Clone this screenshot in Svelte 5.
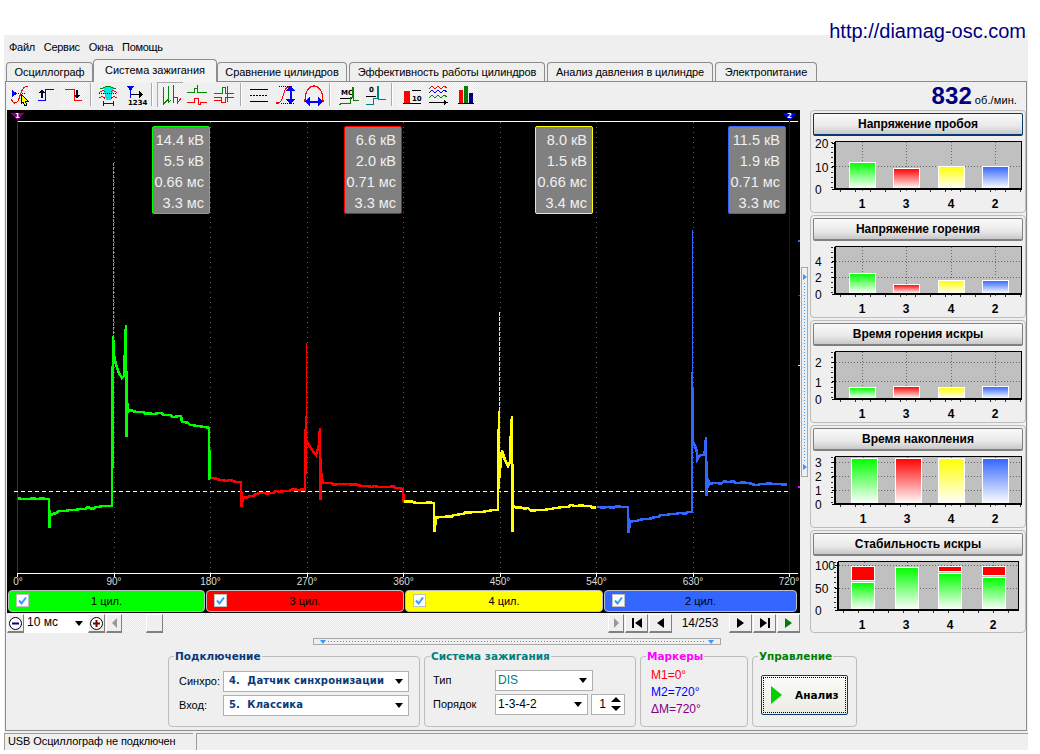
<script>
  const tabs = ['Осциллограф', 'Система зажигания', 'Сравнение цилиндров', 'Эффективность работы цилиндров', 'Анализ давления в цилиндре', 'Электропитание'];
  const menu = ['Файл', 'Сервис', 'Окна', 'Помощь'];

  const degrees = [0, 90, 180, 270, 360, 450, 540, 630, 720];
  const tickX = (i) => 17.5 + i * 96.5;

  const colors = { green: '#00ff00', red: '#ff0000', yellow: '#ffff00', blue: '#3366ff' };

  // the sampled signal is never quite flat, so long runs get small steps
  function roughen(points) {
    const pts = points.split(' ').map((p) => p.split(',').map(Number));
    const out = [];
    pts.forEach(([x, y], i) => {
      out.push(`${x},${y}`);
      const next = pts[i + 1];
      if (!next || next[0] - x < 5) return;
      for (let sx = x + 3; sx < next[0] - 1; sx += 3) {
        const sy = y + ((next[1] - y) * (sx - x)) / (next[0] - x);
        const noise = Math.round(Math.sin(sx * 0.7) * 0.6 + Math.sin(sx * 1.9) * 0.4);
        out.push(`${sx},${Math.round(sy + noise)}`);
      }
    });
    return out.join(' ');
  }

  // page coordinates, viewBox of the scope starts at 7,110
  const traces = [
    {
      color: colors.green,
      spike: 'M113.5 163V337',
      dash: '3 1',
      thick: 'M113 336V430M125.5 352V372M49.5 510V522M127 405V420',
      points: '18,498 30,499 49,499 49.5,528 50,515 56,513 66,511 76,510 90,508 105,506 112,506 113,336 114,355 116,365 119,373 122,378 124,376 125,350 126,325 126.5,437 127,400 128,412 130,410 140,412 155,414 170,415 175,417 181,416 182,422 190,425 200,426 209,428 209.5,479 210,479'
    },
    {
      color: colors.red,
      spike: 'M306.5 343V418',
      thick: 'M306 416V465M319.5 428V445M241.500 495V505M321 475V490',
      points: '211,478 220,480 230,480 241,482 241.5,507 243,497 250,496 260,493 267,493.5 280,492 291,490 305,490 306,416 306,440 309,445 312,450 316,455 319,445 320,428 320.5,500 321,472 323,483 328,483 340,484 355,484 365,486 375,486 390,487 403,489 403.5,502'
    },
    {
      color: colors.yellow,
      spike: 'M499.5 312V412',
      dash: '4 1',
      thick: 'M498.5 411V480M511.5 416V470M434.500 517V532M513 505V520',
      points: '404,501 420,503 434,503 434.5,532 436,518 445,517 460,514 480,512 498,510 499,411 499,480 502,450 505,460 508,466 510,462 511,430 512,416 512.5,532 513,505 516,508 525,508.5 530,510 545,510 555,508 565,507 575,506 590,506 596,507'
    },
    {
      color: colors.blue,
      spike: 'M692.5 230V373',
      thick: 'M692 372V475M628.500 518V530M707 478V490',
      points: '597,507 628,507 628.5,533 630,522 640,520 655,517 670,514 690,512 692,512 692,372 693,442 695,446 697,452 697,460 700,455 704,455 705,450 706,437 706.5,496 708,480 710,484 715,483 730,482 740,483 760,484 775,484 787,484'
    }
  ].map((t) => ({ ...t, points: roughen(t.points) }));

  const infoBoxes = [
    { left: 145, color: colors.green, lines: ['14.4 кВ', '5.5 кВ', '0.66 мс', '3.3 мс'] },
    { left: 337, color: colors.red, lines: ['6.6 кВ', '2.0 кВ', '0.71 мс', '3.3 мс'] },
    { left: 528, color: colors.yellow, lines: ['8.0 кВ', '1.5 кВ', '0.66 мс', '3.4 мс'] },
    { left: 721, color: colors.blue, lines: ['11.5 кВ', '1.9 кВ', '0.71 мс', '3.3 мс'] }
  ];

  const channels = [
    { name: '1 цил.', color: colors.green },
    { name: '3 цил.', color: colors.red },
    { name: '4 цил.', color: colors.yellow },
    { name: '2 цил.', color: colors.blue }
  ];

  const columns = ['green', 'red', 'yellow', 'blue'];
  const names = ['1', '3', '4', '2'];

  // all chart geometry in page coordinates
  const charts = [
    {
      title: 'Напряжение пробоя', focus: true, top: 136, plot: [836, 142, 1021, 189], labelY: 203, labelStart: 815,
      yTicks: [['20', 143], ['10', 166.5], ['0', 189]], grid: [166.5], vGrid: [862, 906, 951, 995], labelX: [862, 906, 951, 995],
      bars: [[849, 27, 162], [893, 27, 168], [938, 27, 166], [982, 27, 166]]
    },
    {
      title: 'Напряжение горения', top: 241, plot: [836, 247, 1021, 294], labelY: 308, labelStart: 815,
      yTicks: [['4', 261], ['2', 277], ['0', 294]], grid: [261, 277], vGrid: [862, 906, 951, 995], labelX: [862, 906, 951, 995],
      bars: [[849, 27, 273], [893, 27, 284], [938, 27, 280], [982, 27, 280]]
    },
    {
      title: 'Время горения искры', top: 346, plot: [836, 352, 1021, 399], labelY: 413, labelStart: 815,
      yTicks: [['2', 362], ['1', 381.5], ['0', 399]], grid: [362, 381.5], vGrid: [862, 906, 951, 995], labelX: [862, 906, 951, 995],
      bars: [[849, 27, 387], [893, 27, 386], [938, 27, 387], [982, 27, 386]]
    },
    {
      title: 'Время накопления', top: 451, plot: [836, 457, 1021, 504], labelY: 518, labelStart: 815,
      yTicks: [['3', 462], ['2', 476], ['1', 490], ['0', 504]], grid: [462, 476, 490], vGrid: [863, 907, 951, 995], labelX: [863, 907, 951, 995],
      bars: [[851, 27, 458], [895, 27, 458], [938, 27, 458], [982, 27, 458]]
    },
    {
      title: 'Стабильность искры', top: 556, plot: [839, 562, 1018, 610], labelY: 624, labelStart: 815,
      yTicks: [['100', 565], ['50', 588], ['0', 610]], grid: [565, 588], vGrid: [864, 907, 951, 993], labelX: [862, 906, 950, 993],
      bars: [[851, 24, 582], [895, 24, 567], [938, 24, 573], [982, 24, 577]],
      allGreen: true,
      fails: [[851, 24, 566, 580], [938, 24, 566, 571], [982, 24, 566, 575]]
    }
  ];
</script>

<div class="page">
  <div class="url">http://diamag-osc.com</div>

  <div class="app">
    <div class="menu">
      {#each menu as item}<span>{item}</span>{/each}
    </div>

    <div class="tabs">
      {#each tabs as tab, i}
        <div class="tab" class:active={i === 1}>{tab}</div>
      {/each}
    </div>

    <div class="panel">
      <div class="toolbar">
        <button class="tool on"><svg viewBox="6 82 26 25"><path d="M13 93.5H24" stroke="#00f" stroke-dasharray="1 1" /><path d="M11 90l5 3.5-5 3.5z" fill="#00f" /><path d="M10 99q3 7 7 2l3-8q3-8 7-6" stroke="#f00" fill="none" stroke-width="1.2" /><path d="M20 94v10l2-2 2 4 2-1-2-4h3z" fill="#ff0" stroke="#000" /></svg></button>
        <button class="tool"><svg viewBox="33 82 26 25"><path d="M37 100.5H44.5V89.5H53" stroke="#00f" fill="none" /><path d="M41 98V92" stroke="#003" stroke-width="2" /><path d="M38 93l3-4 3 4z" fill="#003" /></svg></button>
        <button class="tool on"><svg viewBox="60 82 26 25"><path d="M64 89.500H73.500V100.500H81" stroke="#f00" fill="none" /><path d="M76 90V96" stroke="#003" stroke-width="2" /><path d="M73 95l3 4 3-4z" fill="#003" /></svg></button>
        <span class="sep"></span>
        <button class="tool"><svg viewBox="94 82 26 25"><path d="M102 87h11l-3 13h-5z" fill="#00e8e8" /><path d="M99 89l8-3 8 3" stroke="#080" fill="none" /><path d="M98 93q4-4 6-1M116 93q-4-4-6-1M98 98q4-3 6 1M116 98q-4-3-6 1" stroke="#f00" fill="none" /><path d="M98 93.500H116" stroke="#000" stroke-dasharray="1 1" /><path d="M103 103.500H112M102.500 101v5M112.500 101v5" stroke="#00f" /></svg></button>
        <button class="tool"><svg viewBox="121 82 26 25"><path d="M126 86h7l-3.500 5z" fill="#00f" /><path d="M129.500 88V98" stroke="#00f" /><path d="M130 94.500H140" stroke="#000" /><path d="M138 91l4 3.500-4 3.500z" fill="#000" /><text class="icon-text" x="127" y="105">1234</text></svg></button>
        <span class="sep wide"></span>
        <button class="tool on pressed"><svg viewBox="156 82 26 25"><path d="M162.500 87V104L167 99.500V97" stroke="#080" fill="none" /><path d="M167.500 86V102L170 100" stroke="#080" fill="none" /><path d="M172.500 85V103M172.500 97H176.500V103L180 98" stroke="#f00" fill="none" /></svg></button>
        <button class="tool"><svg viewBox="183 82 26 25"><path d="M186 92.500H193.500V88.500H196.500V85V92.500H206" stroke="#080" fill="none" /><path d="M186 102.500H193.500V98.500H197.500V104.500H199.500V102.500H206" stroke="#f00" fill="none" /></svg></button>
        <button class="tool"><svg viewBox="210 82 26 25"><path d="M213 93.500H221.500V87H224.500V93.500H233" stroke="#080" fill="none" /><path d="M226.500 86V102" stroke="#080" /><path d="M213 97.500H220.500V102H224.500V97.500H233M213 100.500H220" stroke="#f00" fill="none" /></svg></button>
        <span class="sep wide"></span>
        <button class="tool"><svg viewBox="245 82 26 25"><path d="M249 89.500H267M249 101.500H267" stroke="#000" /><path d="M249 95.500H267" stroke="#000" stroke-dasharray="2 1" /></svg></button>
        <button class="tool"><svg viewBox="272 82 26 25"><path d="M275 103q4 1 6-4l3-9q2-4 6-3" stroke="#f00" fill="none" stroke-width="1.2" /><path d="M278 86.500H292M280 103.500H294" stroke="#000" stroke-dasharray="1 1" /><path d="M289.500 90V100" stroke="#00f" stroke-width="2" /><path d="M285 91l4.500-5 4.500 5zM285 99l4.500 5 4.500-5z" fill="#00f" /></svg></button>
        <button class="tool"><svg viewBox="299 82 26 25"><path d="M304 102q0-15 9-16 9 1 9 16" stroke="#f00" fill="none" stroke-width="1.2" /><path d="M308 101.500H318" stroke="#00f" stroke-width="2" /><path d="M309 97l-5 4.500 5 4.500zM317 97l5 4.500-5 4.500z" fill="#00f" /></svg></button>
        <span class="sep wide"></span>
        <button class="tool on"><svg viewBox="334 82 26 25"><text class="icon-text" x="340" y="95">МС</text><path d="M339 98.500H351" stroke="#000" /><path d="M338 105l3-2H349.500V97H351.500V87H352.500V100.500H358" stroke="#080" fill="none" /></svg></button>
        <button class="tool"><svg viewBox="361 82 26 25"><text class="icon-text" x="368" y="92">0</text><path d="M365 96.500H375" stroke="#000" /><path d="M365 104.500H372.500V98H376.500V86H377.500V99.500H385" stroke="#008080" fill="none" /></svg></button>
        <span class="sep wide"></span>
        <button class="tool on"><svg viewBox="396 82 26 25"><rect x="403" y="91" width="6" height="12" fill="#f00" /><path d="M411 90.500H420M402 103.500H420" stroke="#000" /><text class="icon-text" x="411" y="101">10</text></svg></button>
        <button class="tool"><svg viewBox="423 82 26 25"><path d="M428 89l3-3 3 3 3-3 3 3 3-3 3 2" stroke="#f00" fill="none" /><path d="M428 93l3-3 3 3 3-3 3 3 3-3 3 2" stroke="#00f" fill="none" /><path d="M428 98l3-3 3 3 3-3 3 3 3-3 3 2" stroke="#080" fill="none" /><path d="M428 102.500H444" stroke="#000" /><path d="M443 100l4 2.500-4 2.500z" fill="#000" /></svg></button>
        <button class="tool on"><svg viewBox="450 82 26 25"><rect x="458" y="90" width="4" height="13" fill="#f00" /><rect x="463" y="86" width="4" height="17" fill="#008000" /><rect x="468" y="93" width="4" height="10" fill="#00007f" /><path d="M457 103.500H473" stroke="#000" /></svg></button>
        <div class="rpm"><b>832</b><span>об./мин.</span></div>
      </div>

      <div class="middle">
        <div class="scope-col">
          <div class="scope">
            <svg class="trace" viewBox="7 110 793 479" width="793" height="479">
              {#each degrees as deg, i}
                <path d="M{tickX(i)} 122V573" stroke="#606060" stroke-dasharray="1 4" />
                <path d="M{tickX(i)} 573V577" stroke="#fff" />
                <text class="deg" x={i === 0 ? 18 : i === 8 ? 789 : tickX(i)} y="585">{deg}°</text>
              {/each}
              <path d="M17 121.500H798" stroke="#fff" />
              <path d="M17 573.500H798" stroke="#fff" />
              <path d="M17.500 113V573" stroke="#800080" />
              <path d="M789.500 113V573" stroke="#0000e0" />
              <path d="M14 491.500H789" stroke="#fff" stroke-dasharray="4 3" />
              {#each traces as t}
                <path d={t.spike} stroke={t.color} stroke-dasharray={t.dash} />
                <path d={t.thick} stroke={t.color} stroke-width="2" />
                <polyline points={t.points} stroke={t.color} stroke-width="2.600" fill="none" />
              {/each}
              <path d="M10 113h15l-7.500 7z" fill="#800080" />
              <path d="M782 113h15l-7.500 7z" fill="#0000f0" />
              <text class="pin" x="17.500" y="118">1</text>
              <text class="pin" x="789.500" y="118">2</text>
              <rect x="798" y="240" width="2" height="2" fill="#3366ff" />
              <rect x="798" y="295" width="2" height="1" fill="#f00" />
              <rect x="798" y="365" width="2" height="1" fill="#fff" />
              <rect x="798" y="486" width="2" height="2" fill="#f0f" />
            </svg>

            {#each infoBoxes as box}
              <div class="info" style="left: {box.left}px; border-color: {box.color}">
                {#each box.lines as line}<div>{line}</div>{/each}
              </div>
            {/each}

            <div class="channels">
              {#each channels as ch}
                <div class="channel" style="background: {ch.color}">
                  <span class="check"><svg viewBox="0 0 11 11" width="11" height="11"><path d="M2 5.500l2.500 3L9 2.500" stroke="#3399ff" stroke-width="2" fill="none" /></svg></span>
                  <span class="ch-name">{ch.name}</span>
                </div>
              {/each}
            </div>
          </div>

          <div class="controls">
            <button class="ctl round"><svg viewBox="0 0 15 15" width="15" height="15"><circle cx="7.500" cy="7.500" r="6" fill="#fff" stroke="#000" /><path d="M4 7.500H11" stroke="#00007f" stroke-width="2" /></svg></button>
            <div class="range">10 мс<i class="arrow"></i></div>
            <button class="ctl round"><svg viewBox="0 0 15 15" width="15" height="15"><circle cx="7.500" cy="7.500" r="6" fill="#fff" stroke="#000" /><path d="M4 7.500H11M7.500 4V11" stroke="#7f0000" stroke-width="2" /></svg></button>
            <button class="ctl scroll-end"><i class="tri left grey"></i></button>
            <div class="track"><span class="thumb"></span></div>
            <button class="ctl scroll-end"><i class="tri right grey"></i></button>
            <button class="ctl nav"><i class="bar"></i><i class="tri left"></i></button>
            <button class="ctl nav"><i class="tri left"></i></button>
            <div class="counter">14/253</div>
            <button class="ctl nav"><i class="tri right"></i></button>
            <button class="ctl nav"><i class="tri right"></i><i class="bar"></i></button>
            <button class="ctl nav"><i class="tri right play"></i></button>
          </div>
        </div>

        <div class="vsplit">
          <i class="tri right blue"></i>
          <i class="dots"></i>
          <i class="tri right blue"></i>
        </div>

        <div class="side">
          {#each charts as c}
            <section class="chart">
              <div class="chart-title" class:focus={c.focus}>{c.title}</div>
              <svg viewBox="810 {c.top} 215 75" width="215" height="75">
                <rect x={c.plot[0]} y={c.plot[1]} width={c.plot[2] - c.plot[0]} height={c.plot[3] - c.plot[1]} fill="#c0c0c0" />
                {#each c.grid as y}
                  <path d="M{c.plot[0]} {y}H{c.plot[2]}" stroke="#666" stroke-dasharray="1 2" />
                {/each}
                {#each c.vGrid as x}
                  <path d="M{x + 0.5} {c.plot[1]}V{c.plot[3] + 3}" stroke="#666" stroke-dasharray="1 2" />
                {/each}
                {#each c.bars as b, i}
                  <rect x={b[0] + 0.5} y={b[2] + 0.5} width={b[1] - 1} height={c.plot[3] - b[2] - 1} fill="url(#fade-{c.allGreen ? 'green' : columns[i]})" stroke="#fff" />
                {/each}
                {#each c.fails || [] as f}
                  <rect x={f[0] + 0.5} y={f[2] + 0.5} width={f[1] - 1} height={f[3] - f[2]} fill="#f00" stroke="#fff" />
                {/each}
                <path d="M{c.plot[0] - 1} {c.plot[3]}V{c.plot[1] - 0.5}H{c.plot[2] + 0.5}V{c.plot[3]}" fill="none" stroke="#000" />
                <path d="M{c.plot[0] - 1} {c.plot[1]}V{c.plot[3]}" stroke="#000" stroke-width="2" />
                <path d="M{c.plot[0] - 4} {c.plot[1]}V{c.plot[3]}" stroke="#333" stroke-width="2" stroke-dasharray="1 4" />
                <path d="M{c.plot[0] - 1} {c.plot[3] - 0.5}H{c.plot[2] + 1}" stroke="#000" stroke-width="2" />
                <path d="M{c.plot[0] + 4} {c.plot[3] + 2}H{c.plot[2]}" stroke="#333" stroke-width="2" stroke-dasharray="1 14" />
                {#each c.yTicks as t}
                  <path d="M{c.plot[0] - 4} {t[1]}H{c.plot[0]}" stroke="#000" />
                  <text class="y-label" x={c.labelStart} y={t[1] + 5}>{t[0]}</text>
                {/each}
                {#each c.labelX as x, i}
                  <text class="x-label" x={x} y={c.labelY + 5}>{names[i]}</text>
                {/each}
              </svg>
            </section>
          {/each}
        </div>
      </div>

      <div class="hsplit">
        <i class="tri down blue"></i>
        <i class="dots"></i>
        <i class="tri down blue"></i>
      </div>

      <div class="settings">
        <div class="box connect">
          <span class="legend navy">Подключение</span>
          <div class="row"><label for="sync">Синхро:</label><div id="sync" class="combo strong">4.&nbsp;&nbsp;Датчик синхронизации<i class="arrow"></i></div></div>
          <div class="row"><label for="input">Вход:</label><div id="input" class="combo strong">5.&nbsp;&nbsp;Классика<i class="arrow"></i></div></div>
        </div>

        <div class="box ignition">
          <span class="legend teal">Система зажигания</span>
          <div class="row"><label for="type">Тип</label><div id="type" class="combo dis">DIS<i class="arrow"></i></div></div>
          <div class="row">
            <label for="order">Порядок</label>
            <div id="order" class="combo plain">1-3-4-2<i class="arrow"></i></div>
            <div class="spin">1<span class="updown"><i class="tri up"></i><i class="tri down"></i></span></div>
          </div>
        </div>

        <div class="box markers">
          <span class="legend magenta">Маркеры</span>
          <div class="mark m1">M1=0°</div>
          <div class="mark m2">M2=720°</div>
          <div class="mark m3">ΔM=720°</div>
        </div>

        <div class="box control">
          <span class="legend green">Управление</span>
          <button class="run"><i class="go"></i><span>Анализ</span></button>
        </div>
      </div>
    </div>

    <div class="status">
      <div class="cell first">USB Осциллограф не подключен</div>
      <div class="cell rest"></div>
    </div>
  </div>

  <svg class="defs" width="0" height="0">
    <defs>
      {#each columns as key}
        <linearGradient id="fade-{key}" x1="0" y1="0" x2="0" y2="1">
          <stop offset="0" stop-color={colors[key]} />
          <stop offset="1" stop-color="#fff" />
        </linearGradient>
      {/each}
    </defs>
  </svg>
</div>

<style>
  :global(body) {
    margin: 0;
    background: #fff;
  }

  .page {
    position: relative;
    width: 1040px;
    font: 11px "Liberation Sans", sans-serif;
    color: #000;
  }

  .url {
    position: absolute;
    top: 20px;
    right: 14px;
    font: 20px "Liberation Sans", sans-serif;
    color: #00007f;
  }

  .app {
    margin-left: 4px;
    padding-top: 35px;
    width: 1024px;
    background: linear-gradient(#fff 35px, #efefef 35px);
  }

  .menu {
    display: flex;
    gap: 9px;
    height: 24px;
    align-items: center;
    padding: 0 0 0 5px;
    letter-spacing: -0.3px;
  }

  .tabs {
    display: flex;
    align-items: flex-end;
    height: 22px;
    padding-left: 2px;
    letter-spacing: -0.1px;
  }

  .tab {
    box-sizing: border-box;
    height: 19px;
    text-align: center;
    line-height: 19px;
    border: 1px solid #8c8c8c;
    border-bottom: none;
    border-radius: 4px 4px 0 0;
    background: #efefef;
    margin-right: 1px;
    flex: none;
  }

  .tab:nth-child(1) {
    width: 87px;
    margin-right: 0;
  }

  .tab:nth-child(3) {
    width: 130px;
    margin-right: 2px;
  }

  .tab:nth-child(4) {
    width: 196px;
    margin-right: 2px;
  }

  .tab:nth-child(5) {
    width: 166px;
    margin-right: 2px;
  }

  .tab:nth-child(6) {
    width: 102px;
  }

  .tab.active {
    width: 124px;
    height: 23px;
    line-height: 21px;
    letter-spacing: 0;
    background: #f4f4f4;
    position: relative;
    top: 1px;
    margin-right: 0;
    z-index: 1;
  }

  .panel {
    box-sizing: border-box;
    height: 650px;
    margin-left: 1px;
    width: 1022px;
    border: 1px solid #8c8c8c;
    padding-left: 1px;
  }

  .toolbar {
    display: flex;
    align-items: flex-start;
    gap: 1px;
    height: 28px;
    box-sizing: border-box;
  }

  .tool {
    width: 26px;
    height: 25px;
    padding: 0;
    border: none;
    background: none;
    flex: none;
  }

  .tool svg {
    display: block;
    width: 26px;
    height: 25px;
    shape-rendering: crispEdges;
  }

  .tool.on {
    background-color: #fbfbfb;
    background-image: conic-gradient(#e8e8e8 25%, transparent 0 50%, #e8e8e8 0 75%, transparent 0);
    background-size: 2px 2px;
  }

  .tool.pressed {
    box-shadow: inset 1px 1px 0 #aaa;
  }

  .icon-text {
    font: bold 7px "DejaVu Sans", sans-serif;
    fill: #000;
  }

  .sep {
    width: 2px;
    height: 23px;
    margin: 1px 2px 0;
    background: linear-gradient(90deg, #aaa 50%, #fff 50%);
  }

  .sep.wide {
    margin-right: 3px;
  }

  .rpm {
    margin-left: auto;
    margin-right: 9px;
    display: flex;
    align-items: baseline;
    gap: 3px;
    line-height: 26px;
    letter-spacing: 0.1px;
  }

  .rpm b {
    font: bold 24px "Liberation Sans", sans-serif;
    color: #00007f;
  }

  .middle {
    display: flex;
    height: 523px;
  }

  .scope-col {
    width: 793px;
    flex: none;
  }

  .scope {
    position: relative;
    height: 503px;
    background: #000;
  }

  .trace {
    display: block;
    shape-rendering: crispEdges;
  }

  .deg {
    font: 10px "Liberation Sans", sans-serif;
    fill: #ddd;
    text-anchor: middle;
  }

  .pin {
    font: bold 7px "DejaVu Sans", sans-serif;
    fill: #fff;
    text-anchor: middle;
  }

  .info {
    position: absolute;
    top: 16px;
    box-sizing: border-box;
    width: 58px;
    height: 88px;
    padding: 3px 5px 0 0;
    border: 1px solid;
    border-radius: 2px;
    background: #808080;
    color: #f0f0f0;
    text-align: right;
    font: 14.500px/21px "Liberation Sans", sans-serif;
  }

  .channels {
    display: grid;
    grid-template-columns: 197px 198px 198px 193px;
    gap: 1px;
    padding: 1px 0 0 1px;
  }

  .channel {
    position: relative;
    height: 22px;
    box-sizing: border-box;
    border: 1px solid #bdbdbd;
    border-radius: 4px;
    display: flex;
    align-items: center;
    justify-content: center;
  }

  .check {
    position: absolute;
    left: 7px;
    top: 3px;
    width: 11px;
    height: 11px;
    padding: 0;
    background: #fff;
    border: 1px solid #c0c0c0;
  }

  .check svg {
    display: block;
  }

  .controls {
    display: flex;
    height: 19px;
    align-items: stretch;
    margin-top: 1px;
  }

  .ctl {
    box-sizing: border-box;
    width: 17px;
    padding: 0;
    border: 1px solid;
    border-color: #fff #808080 #808080 #fff;
    border-bottom-width: 2px;
    background: #efefef;
    display: flex;
    align-items: center;
    justify-content: center;
    gap: 1px;
    flex: none;
  }

  .ctl.nav {
    width: 23px;
    margin-left: 1px;
  }

  .ctl.scroll-end {
    width: 16px;
    margin-left: 1px;
  }

  .range {
    position: relative;
    width: 64px;
    background: #fff;
    padding-left: 3px;
    box-sizing: border-box;
    line-height: 17px;
    font-size: 12px;
  }

  .track {
    flex: 1;
    background-color: #fbfbfb;
    background-image: conic-gradient(#e4e4e4 25%, transparent 0 50%, #e4e4e4 0 75%, transparent 0);
    background-size: 2px 2px;
    display: flex;
  }

  .thumb {
    width: 17px;
    margin-left: 24px;
    box-sizing: border-box;
    background: #efefef;
    border: 1px solid;
    border-color: #fff #808080 #808080 #fff;
    border-bottom-width: 2px;
  }

  .counter {
    width: 56px;
    text-align: center;
    font: 12px/18px "Liberation Sans", sans-serif;
  }

  i.tri {
    display: block;
    width: 0;
    height: 0;
    border-style: solid;
    flex: none;
  }

  .tri.left {
    border-width: 5px 7px 5px 0;
    border-color: transparent #000 transparent transparent;
  }

  .tri.right {
    border-width: 5px 0 5px 7px;
    border-color: transparent transparent transparent #000;
  }

  .tri.up {
    border-width: 0 5px 5px;
    border-color: transparent transparent #000;
  }

  .tri.down {
    border-width: 5px 5px 0;
    border-color: #000 transparent transparent;
  }

  .tri.grey {
    border-width: 5px 5px;
    border-top-color: transparent;
    border-bottom-color: transparent;
  }

  .tri.left.grey {
    border-left-width: 0;
    border-right-color: #999;
  }

  .tri.right.grey {
    border-right-width: 0;
    border-left-color: #999;
  }

  .tri.right.play {
    border-left-color: #007f00;
  }

  i.bar {
    display: block;
    width: 2px;
    height: 10px;
    background: #000;
  }

  .vsplit,
  .hsplit {
    box-sizing: border-box;
    border: 1px solid #a8a8a8;
    display: flex;
    align-items: center;
    justify-content: space-between;
  }

  .vsplit {
    flex-direction: column;
    width: 7px;
    height: 210px;
    margin-left: 1px;
    align-self: center;
    padding: 6px 0 6px 1px;
  }

  .hsplit {
    width: 408px;
    height: 7px;
    margin: 5px auto 0;
    padding: 0 6px;
  }

  .tri.right.blue {
    border-width: 3px 0 3px 4px;
    border-left-color: #3399ff;
  }

  .tri.down.blue {
    border-width: 4px 3px 0;
    border-top-color: #3399ff;
  }

  .dots {
    flex: 1;
    align-self: stretch;
    margin: 2px;
  }

  .vsplit .dots {
    width: 1px;
    margin: 3px 0;
    align-self: flex-start;
    margin-left: 1px;
    background: repeating-linear-gradient(#3399ff 0 1px, transparent 1px 3px);
  }

  .hsplit .dots {
    height: 1px;
    align-self: center;
    background: repeating-linear-gradient(90deg, #3399ff 0 1px, transparent 1px 3px);
  }

  .side {
    margin-left: 2px;
    width: 216px;
    display: flex;
    flex-direction: column;
    gap: 2px;
  }

  .chart {
    box-sizing: border-box;
    height: 103px;
    border: 1px solid #bcbcbc;
    border-radius: 4px;
    padding: 2px 2px 0;
    overflow: hidden;
  }

  .chart svg {
    display: block;
    margin: 0 0 0 -3px;
    shape-rendering: crispEdges;
  }

  .chart-title {
    box-sizing: border-box;
    height: 23px;
    border: 1px solid #808080;
    border-bottom-width: 2px;
    border-radius: 2px;
    background: linear-gradient(#fafafa, #e9e9e9 60%, #c8c8c8);
    text-align: center;
    font: bold 12px/21px "Liberation Sans", sans-serif;
  }

  .chart-title.focus {
    border-color: #0a3a6e;
  }

  .y-label {
    font: 12px "Liberation Sans", sans-serif;
  }

  .x-label {
    font: bold 12px "Liberation Sans", sans-serif;
    text-anchor: middle;
  }

  .settings {
    display: flex;
    gap: 4px;
    padding-left: 161px;
    margin-top: 11px;
  }

  .box {
    position: relative;
    box-sizing: border-box;
    height: 71px;
    border: 1px solid #bcbcbc;
    border-radius: 4px;
    padding: 12px 10px 0;
  }

  .connect {
    width: 252px;
  }

  .ignition {
    width: 212px;
    padding-left: 8px;
    padding-top: 11px;
  }

  .markers {
    width: 108px;
    padding-left: 10px;
    padding-top: 10px;
  }

  .control {
    width: 105px;
    padding-top: 18px;
    padding-left: 8px;
  }

  .legend {
    position: absolute;
    top: -7px;
    left: 5px;
    padding: 0 1px;
    background: #efefef;
    font: bold 10.500px/13px "DejaVu Sans", sans-serif;
  }

  .navy {
    color: #0a3a7a;
  }

  .teal {
    color: #008080;
  }

  .magenta {
    color: #ff00ff;
  }

  .green {
    color: #007f00;
  }

  .row {
    display: flex;
    align-items: center;
    height: 24px;
  }

  .row label {
    width: 44px;
    flex: none;
    font-size: 11px;
  }

  .ignition .row label {
    width: 62px;
  }

  .combo {
    position: relative;
    box-sizing: border-box;
    height: 21px;
    width: 186px;
    background: #fff;
    border: 1px solid #b0b0b0;
    padding-left: 5px;
    line-height: 18px;
    white-space: pre;
  }

  .combo.strong {
    font: bold 10px/18px "DejaVu Sans", sans-serif;
    letter-spacing: 0.15px;
    color: #0a3a7a;
  }

  .combo.dis,
  .combo.plain {
    width: 98px;
    padding-left: 2px;
    font: 12px/18px "Liberation Sans", sans-serif;
  }

  .combo.dis {
    color: #008080;
  }

  .arrow {
    position: absolute;
    right: 5px;
    top: 7px;
    border-style: solid;
    border-width: 5px 4.500px 0;
    border-color: #000 transparent transparent;
  }

  .spin {
    box-sizing: border-box;
    display: flex;
    justify-content: space-between;
    align-items: center;
    width: 35px;
    height: 21px;
    margin-left: 3px;
    padding: 0 3px 0 7px;
    background: #fff;
    border: 1px solid #b0b0b0;
    font: 12px "Liberation Sans", sans-serif;
  }

  .updown {
    display: flex;
    flex-direction: column;
    gap: 4px;
  }

  .mark {
    font: 12px/17px "Liberation Sans", sans-serif;
  }

  .m1 {
    color: #f00;
  }

  .m2 {
    color: #00f;
  }

  .m3 {
    color: #800080;
  }

  .run {
    box-sizing: border-box;
    display: flex;
    align-items: center;
    gap: 13px;
    width: 87px;
    height: 40px;
    padding: 0 0 0 9px;
    border: 1px solid #0a3a6e;
    border-radius: 2px;
    outline: 1px dotted #000;
    outline-offset: -3px;
    background: linear-gradient(#fbfbf8, #ecece4);
    font: bold 10.500px "DejaVu Sans", sans-serif;
  }

  .go {
    display: block;
    border-style: solid;
    border-width: 9px 0 9px 11px;
    border-color: transparent transparent transparent #00d000;
  }

  .status {
    display: flex;
    gap: 3px;
    height: 17px;
    margin-top: 2px;
    background: #efefef;
    letter-spacing: -0.1px;
  }

  .cell {
    box-sizing: border-box;
    border-top: 1px solid #9c9c9c;
    border-left: 1px solid #9c9c9c;
    padding: 1px 0 0 3px;
  }

  .cell.first {
    width: 189px;
    white-space: nowrap;
  }

  .cell.rest {
    flex: 1;
  }

  .defs {
    position: absolute;
  }
</style>
